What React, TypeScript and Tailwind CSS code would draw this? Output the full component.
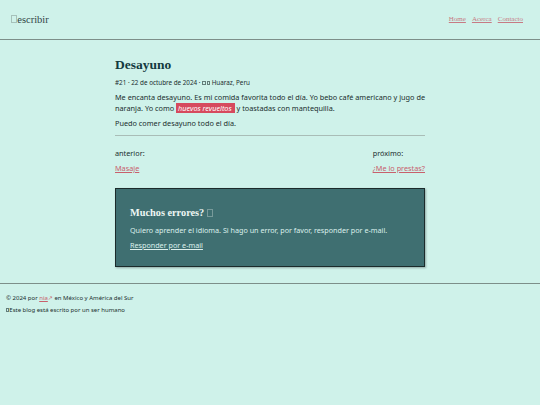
function Tofu({ className = '' }: { className?: string }) {
  // the reference shows missing-glyph boxes where emoji would be
  return (
    <span
      className={`inline-block h-[0.75em] w-[0.55em] border border-current align-[-0.05em] opacity-60 ${className}`}
    />
  );
}

export default function App() {
  const sans = { fontFamily: '"Noto Sans", "DejaVu Sans", sans-serif' };
  const serif = { fontFamily: '"Liberation Serif", "Times New Roman", serif' };
  return (
    <div className="min-h-[405px] bg-[#cff2ea] text-[#1a2e2e]" style={sans}>
      <header className="flex h-[40px] items-center justify-between border-b border-[#7d8f89] pl-[11px] pr-[17px]">
        <span className="text-[10.5px] text-[#2f4545]" style={serif}>
          <Tofu className="mr-[0.5px] text-[#8aa09a]" />
          escribir
        </span>
        <nav className="flex gap-[6px] text-[7px]" style={serif}>
          <a className="text-[#c77a84] underline">Home</a>
          <a className="text-[#c77a84] underline">Acerca</a>
          <a className="text-[#c77a84] underline">Contacto</a>
        </nav>
      </header>

      <main className="mx-auto w-[310px] pt-[17px]">
        <h1 className="text-[13.5px] font-bold leading-[16px] text-[#133a40]" style={serif}>
          Desayuno
        </h1>
        <p className="mt-[6px] text-[6.3px] leading-[8px]">
          #21 · 22 de octubre de 2024 · <Tofu className="mr-[1px]" />
          <Tofu /> Huaraz, Peru
        </p>
        <p className="mt-[4.5px] text-[7.3px] leading-[11px]">
          Me encanta desayuno. Es mi comida favorita todo el día. Yo bebo café americano y jugo de naranja. Yo
          como <em className="bg-[#d64a5e] px-[2px] pr-[3px] text-white">huevos revueltos</em> y toastadas con
          mantequilla.
        </p>
        <p className="mt-[4px] text-[7.3px] leading-[11px]">Puedo comer desayuno todo el día.</p>
        <hr className="mt-[6.5px] border-[#a9bdb7]" />

        <div className="mt-[12px] flex justify-between text-[7.3px] leading-[10px]">
          <div className="flex flex-col gap-[5px]">
            <span>anterior:</span>
            <a className="text-[#c8606c] underline">Masaje</a>
          </div>
          <div className="flex flex-col gap-[5px]">
            <span>próximo:</span>
            <a className="text-[#c8606c] underline">¿Me lo prestas?</a>
          </div>
        </div>

        <section className="mt-[15px] border border-[#1b2b2b] bg-[#3f6f71] px-[14px] pb-[16px] pt-[17px] text-[#dcefec] shadow-[1px_1px_2px_rgba(0,0,0,0.3)]">
          <h2 className="text-[10.3px] font-bold leading-[14px] text-[#eef7f5]" style={serif}>
            Muchos errores? <Tofu className="text-[#9fb8b5]" />
          </h2>
          <p className="mt-[5px] text-[7.2px] leading-[10px]">
            Quiero aprender el idioma. Si hago un error, por favor, responder por e-mail.
          </p>
          <a className="mt-[5px] block text-[7.2px] leading-[10px] underline">Responder por e-mail</a>
        </section>
      </main>

      <footer className="mt-[16px] border-t border-[#7d8f89] px-[6px] pt-[10px] text-[6px] leading-[8px] text-[#1a2e2e]">
        <p>
          © 2024 por <a className="text-[#c8606c] underline">nia</a>
          <span className="text-[#c8606c]">↗</span> en México y América del Sur
        </p>
        <p className="mt-[4px]">
          <Tofu />
          Este blog está escrito por un ser humano
        </p>
      </footer>
    </div>
  );
}
